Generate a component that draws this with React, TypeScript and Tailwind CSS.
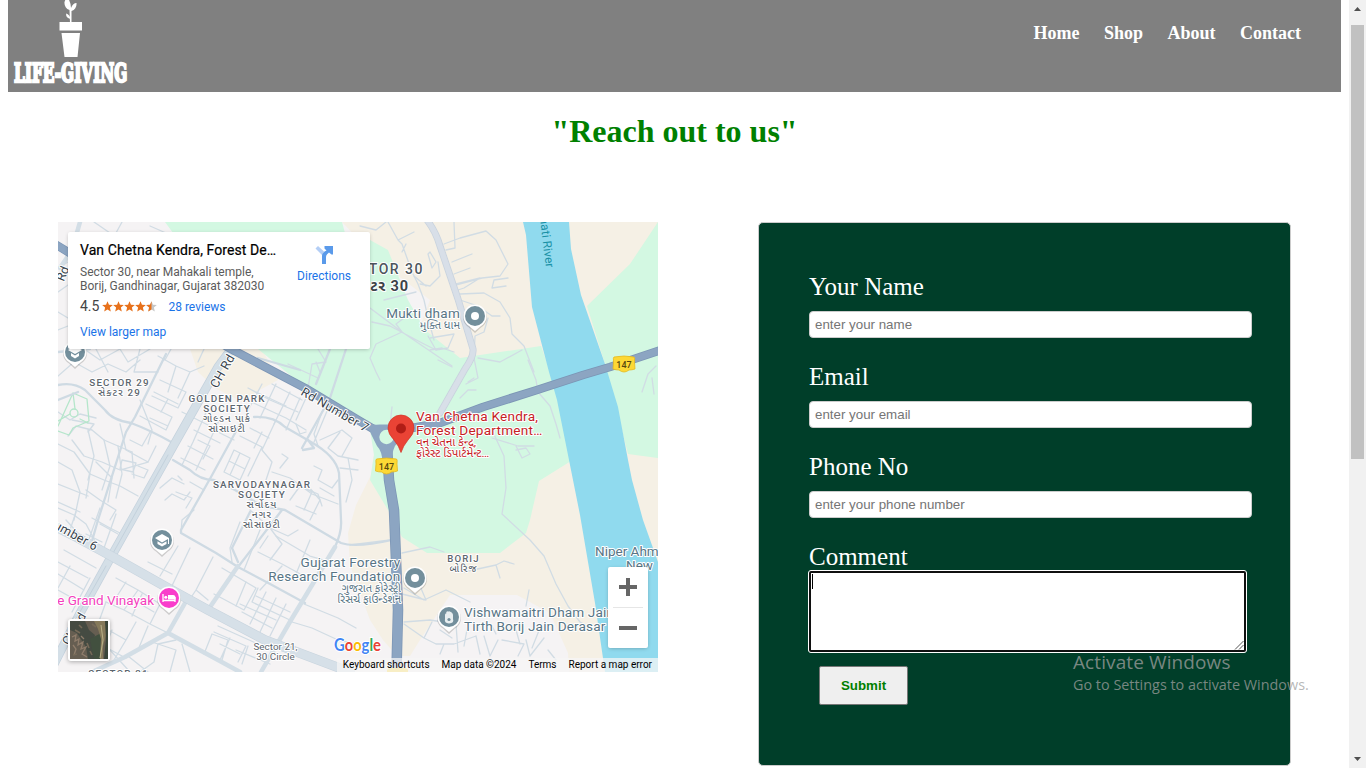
import React from "react";

const SANS = "Roboto, 'Noto Sans', 'Noto Sans Gujarati', sans-serif";

const minorRoads = [
  // north-west corner
  "M58 268L68 262M58 292L68 285M58 312L68 318M58 330L68 326",
  "M94 222L110 233M122 222L116 233M150 226L166 233",
  // below the info card
  "M84 349L100 360L120 349M96 349L108 372M120 349L128 362L150 349M140 349L134 372L158 372M171 349L165 360M58 376L74 362L92 372L108 364L126 372L140 360",
  "M158 356L176 366L190 372L204 366M176 366L168 392M190 372L178 398M204 349L198 362",
  "M160 380L186 392L178 408L152 396M154 392L168 399L161 412M168 399L178 404M146 404L172 417L166 430L140 416M150 418L168 426",
  // west quarter
  "M68 436L76 426L92 430L104 440L118 446L132 452M72 440L84 456L102 462L120 470L148 462",
  "M58 444L74 452L90 474L86 498M58 462L72 470L80 492L74 520M58 484L88 496M58 502L80 512",
  "M88 430L94 456L88 480M104 440L110 466L102 490M118 446L122 474L116 498M132 452L134 478",
  "M120 424L126 450L148 462L156 446M130 440L142 446L150 432M122 460L136 463L133 472L120 469ZM138 466L148 470L144 478L132 474",
  "M90 474L104 480L120 486L138 496M86 490L100 500L116 510L110 520M96 462L112 478L108 502M72 420L94 424L88 432",
  "M58 412L70 420L80 414L96 418M140 400L152 430L148 444",
  "M58 508L74 515L86 524L96 543M66 520L84 540M100 508L88 542M116 514L104 548M130 520L118 546",
  "M76 512L70 530M92 518L110 528L122 534M86 534L102 542M100 524L118 534",
  // central quarter
  "M182 412L208 425M194 430L220 443M188 446L213 459M181 458L205 470M208 408L193 442L182 465M221 416L205 451L196 470",
  "M218 432L234 440M198 440L210 446L203 459M234 450L250 458L240 480L224 472ZM240 453L230 475M229 461L245 469",
  "M240 436L262 447L248 476M250 428L269 438M262 432L254 448M276 420L262 450L272 462L266 480M282 454L288 458L280 468",
  "M160 488L172 478L184 484M178 476L182 480M165 500L172 494L184 500L190 492M176 492L192 498L186 508M190 482L204 490",
  "M239 396L260 406L286 418L306 430M248 388L270 400L298 412M262 384L246 414M276 384L260 418M290 392L274 424M300 398L286 430",
  "M256 392L286 406M272 384L302 400M322 412L314 434L318 446M296 424L300 434L306 432M330 404L314 442M306 398L296 420",
  "M340 432L328 448L338 456M352 438L342 456M338 456L358 460M340 468L358 470M348 458L352 480L346 502M320 440L342 430L352 438",
  "M314 466L322 470L318 480L332 488L338 480M300 486L318 494L322 506M320 488L334 496M272 472L290 478L312 494L338 504",
  "M290 500L300 486L312 492L304 510M296 506L316 514M308 486L320 500L310 520",
  // research foundation quarter
  "M181 533L182 520L194 510M190 548L170 590M178 546L160 576M148 562L172 574M213 557L196 590L208 600M196 590L192 596",
  "M232 562L230 548L240 522M244 570L260 530M222 568L256 588L244 610L214 594M250 510L270 528L282 544L270 560",
  "M258 552L282 564L304 576M270 528L288 536L298 530M268 536L260 548M276 536L310 556L324 560M310 540L296 574",
  "M246 582L236 606M258 588L252 602L292 621M266 592L250 624M276 598L260 632M286 604L270 636M242 612L272 628M236 622L262 636",
  "M256 596L290 612M240 604L276 620M282 566L260 590M292 622L312 628L338 640L356 644M304 604L338 618L356 628",
  // south-west quarter
  "M116 578L138 590L124 610L106 602M126 582L112 604M138 590L160 604L150 624M130 598L154 612M142 594L132 616M124 610L150 624L168 633",
  "M106 602L98 624L126 640L136 622M98 624L88 648M112 630L104 650M126 640L114 660M96 642L122 656M148 626L138 650",
  "M58 574L84 590M58 590L76 600M70 566L58 588M90 578L72 612M64 550L96 568M58 562L88 578",
  "M176 640L158 644L154 662L140 672M204 654L212 634L228 640L222 660M214 632L246 646L238 662M230 638L220 660M220 644L240 654M218 626L258 644M248 646L242 664",
  "M110 650L130 672M128 656L148 672M152 642L176 650L170 672M182 644L190 672M236 650L270 664",
  // green belt
  "M388 222L398 240L402 244L412 272L418 284L424 300L428 318L434 340M398 240L414 232M406 244L402 252M386 222L376 230L360 226",
  "M430 252L436 262L432 268L428 254Z M438 262L440 276L430 286L420 284M414 276L426 286M384 300L416 292M430 338L454 334L448 348L436 350",
  "M444 244L460 238L486 231L496 240L508 264L500 276L482 278L452 286M454 222L455 248L446 250M452 262L472 254M454 274L470 268M456 284L480 278L464 288L458 290",
  "M492 288L494 280L508 278M492 288L506 286M460 294L484 293L500 302L510 318L512 334L524 346L534 372M460 300L478 306L492 316L500 316M488 318L484 332L475 336L474 360",
  "M370 308L402 332L452 366M372 322L390 326L424 344M402 332L396 324L404 318M402 332L376 344L370 358L376 372L380 380M430 350L442 348L454 352M424 344L436 350M428 336L436 350",
  "M474 358L478 378L466 384M460 398L468 390L476 390M468 382L474 378M478 358L500 362L522 350M438 360L452 367",
  "M528 360L536 380L538 392L550 406L556 424L560 438M492 430L504 456L506 488L502 514L530 540L544 556L556 584L568 606L580 622L594 630",
  "M492 438L518 446L534 446M516 446L522 458L530 454L526 448L516 450M318 349L326 362L312 364L308 388M288 364L318 378M316 362L320 372M642 392L648 374L656 366M654 394L652 378M392 407L390 426",
  // south
  "M402 553L430 547L444 552M464 572L496 565L500 578M496 565L504 561L514 564M404 588L424 600L446 590L470 602M420 586L426 600L402 594M350 545L390 540",
  "M404 622L430 620L456 624M404 624L424 638L436 644M456 624L458 652M424 638L432 622M436 644L454 644L476 636M440 630L452 638M468 624L464 646M444 644L440 654M476 636L480 654M484 636L490 656L498 640",
  "M502 640L524 644L518 656M526 640L530 656L544 638M516 630L520 644M548 650L556 660M529 590L526 606M492 626L496 634M540 628L532 648",
];

const localRoads = [
  "M58 385Q74 382 85 390L105 410Q112 420 131 423Q150 430 173 443",
  "M173 460L190 470Q200 480 214 480L235 490L262 506L285 510L341 543Q356 548 392 540",
  "M166 354L135 417L126 432L98 520L90 548",
  "M254 417Q274 416 285 427L311 442Q336 456 339 473L341 520Q342 532 335 547L291 620L261 672",
  "M240 424L211 477L181 530L181 533L216 553L238 567L272 585L305 603",
  "M302 448L330 398L346 349M308 440L314 448L303 450M258 358L300 370M316 384L330 349",
  "M238 567L282 510M238 562L232 548L250 512",
  "M58 352L90 349M58 400L78 392",
];

const mediumRoads = [
  "M238 566L208 610",
  "M185 603L168 633L125 657L92 672M168 633L218 660L240 672",
  "M335 547L291 620L261 672",
  "M80 222L72 250L60 268",
];

function MapLabel({ x, y, lines, size, color, spacing = 0, anchor = "middle", weight = 400, gap }: {
  x: number; y: number; lines: string[]; size: number; color: string; spacing?: number;
  anchor?: "start" | "middle" | "end"; weight?: number; gap: number;
}) {
  return (
    <text x={x} y={y} fontFamily={SANS} fontSize={size} fill={color} letterSpacing={spacing} textAnchor={anchor}
      fontWeight={weight} stroke="#ffffff" strokeWidth={2} strokeLinejoin="round" paintOrder="stroke">
      {lines.map((line, i) => (
        <tspan key={line} x={x} y={y + i * gap}>{line}</tspan>
      ))}
    </text>
  );
}

function Pin({ x, y, color, children }: { x: number; y: number; color: string; children: React.ReactNode }) {
  return (
    <g transform={`translate(${x} ${y})`}>
      <path d="M0 16L-6 10.5A12 12 0 1 1 6 10.5Z" fill="#000" opacity=".16" transform="translate(0 1)" />
      <path d="M0 15L-6 10A11.6 11.6 0 1 1 6 10Z" fill="#fff" />
      <circle r="10" fill={color} />
      {children}
    </g>
  );
}

function Shield({ x, y }: { x: number; y: number }) {
  return (
    <g transform={`translate(${x} ${y})`}>
      <path d="M-10-7Q0-9 10-7Q11-7 10.5-2L11 5Q8 6 5 6Q0 10-5 6Q-8 6-11 5L-10.500-2Q-11-7-10-7Z" fill="#fdd835" stroke="#e3b920" strokeWidth=".8" />
      <text y="3.500" textAnchor="middle" fontFamily={SANS} fontSize="9" fontWeight="500" fill="#57480f">147</text>
    </g>
  );
}

function MapCanvas() {
  const place = "#587585";
  return (
    <svg className="block h-[450px] w-[600px]" viewBox="58 222 600 450">
      <rect x="58" y="222" width="600" height="450" fill="#f5f3f4" />
      <path d="M342 222H658V672H569L568 653L550 613L517 595H450L438 613L420 640L410 656H397L383 640L370 620L350 565L348 533L356 505L371 475L375 445L430 300L380 262Z" fill="#f5f0e5" />
      <path d="M190 349H262L278 380L256 392L242 402L215 388L198 372Z" fill="#f5f0e5" />
      <path d="M165 222H342L345 233L370 240L388 250L408 300L425 330L460 358L541 346L560 400L571 461L539 481L530 520L526 533L500 553H427L402 537L388 510L370 480L374 455L370 430L306 388L258 349Z" fill="#d3f8e2" />
      <path d="M658 222L630 264L587 306L605 364L628 454L658 458Z" fill="#d3f8e2" />
      <path d="M523 222H569L571 249L581 295L605 364L618 407L628 460L632 480L643 520L658 562V672H605L595 603L580 515L557 400L549 372L532 307L526 235Z" fill="#90daee" />
      <g fill="none" strokeLinecap="round" strokeLinejoin="round">
        <g stroke="#d1dce4" strokeWidth="1.300">
          {minorRoads.map((d) => <path key={d} d={d} />)}
        </g>
        <path d="M58 426L73 393L87 399L89 421L73 428L69 435L58 431M73 393L75 409M58 421L70 414M80 419L88 423" stroke="#b5e6cb" strokeWidth="1.300" />
        <circle cx="74" cy="413" r="4" stroke="#b5e6cb" strokeWidth="1.300" />
        <g stroke="#cedae3" strokeWidth="2.300">
          {localRoads.map((d) => <path key={d} d={d} />)}
        </g>
        <g stroke="#d3dee6" strokeWidth="4.500">
          {mediumRoads.map((d) => <path key={d} d={d} />)}
        </g>
        <path d="M427 220Q436 232 440 246L458 299L473 349Q474 356 465 369L440 413" stroke="#c9d3de" strokeWidth="7" />
        <path d="M427 220Q436 232 440 246L458 299L473 349Q474 356 465 369L440 413" stroke="#d8dfe8" strokeWidth="5.400" />
        <path d="M238 340L218 367L175 443L111 557L78 617L50 672" stroke="#c5d2dd" strokeWidth="9" />
        <path d="M238 340L218 367L175 443L111 557L78 617L50 672" stroke="#d4dfe7" strokeWidth="7.600" />
        <path d="M168 455L112 555M106 566L72 626" stroke="#c3d1dc" strokeWidth="1" />
        <path d="M40 519L78 538L113 557L168 588L208 610L265 640L350 672" stroke="#c8d4de" strokeWidth="9.600" />
        <path d="M40 519L78 538L113 557L168 588L208 610L265 640L350 672" stroke="#d6e0e8" strokeWidth="8.400" />
        <path d="M50 241L150 302L231 349L305 388L358 420L375 430" stroke="#7b95b5" strokeWidth="8.500" />
        <path d="M50 241L150 302L231 349L305 388L358 420L375 430" stroke="#8ca5c2" strokeWidth="7" />
        <path d="M395 431L440 423L483 407L537 390L583 375L610 367L670 347" stroke="#7b95b5" strokeWidth="8.600" />
        <path d="M387 446L389 480L394 510L398 610L396 690" stroke="#7b95b5" strokeWidth="10.500" />
        <path d="M395 431L440 423L483 407L537 390L583 375L610 367L670 347" stroke="#8ca5c2" strokeWidth="7" />
        <path d="M387 446L389 480L394 510L398 610L396 690" stroke="#8ca5c2" strokeWidth="9" />
      </g>
      <path d="M368 424Q375 425 380 424.500H398V442Q392 448 391.500 462H382.500Q382 451 377 446Q374 440 371 434Z" fill="#8ca5c2" />
      <circle cx="386.500" cy="437" r="7.200" fill="#d3f8e2" />

      <Shield x={624} y={364} />
      <Shield x={386.500} y={466} />
      <path d="M387 672Q386 668 392 668H404Q409 668 408 672Z" fill="#fdd835" />

      <MapLabel x={424} y={274} lines={["SECTOR 30"]} size={14} spacing={1.500} weight={500} color="#4d565d" gap={0} anchor="end" />
      <MapLabel x={409} y={290.500} lines={["સેક્ટર 30"]} size={14.500} spacing={0.900} weight={700} color="#3c4348" gap={0} anchor="end" />
      <MapLabel x={460} y={318} lines={["Mukti dham"]} size={13.500} color={place} anchor="end" gap={0} spacing={0.250} />
      <MapLabel x={460} y={328.500} lines={["મુક્તિ ધામ"]} size={11} color={place} anchor="end" gap={0} />
      <MapLabel x={119.500} y={385.500} lines={["SECTOR 29", "સેક્ટર 29"]} size={9.800} spacing={1.150} weight={500} color="#5d666e" gap={10} />
      <MapLabel x={227} y={402} lines={["GOLDEN PARK", "SOCIETY", "ગોલ્ડન પાર્ક", "સોસાઇટી"]} size={9.900} spacing={1.100} weight={500} color="#5d666e" gap={10} />
      <MapLabel x={262} y={488} lines={["SARVODAYNAGAR", "SOCIETY", "સર્વોદય", "નગર", "સોસાઇટી"]} size={9.900} spacing={1.150} weight={500} color="#5d666e" gap={10} />
      <MapLabel x={463.500} y={561.500} lines={["BORIJ", "બોરિજ"]} size={9.600} spacing={1.100} weight={500} color="#5d666e" gap={10} />
      <MapLabel x={275.500} y={649.500} lines={["Sector 21,", "30 Circle"]} size={9.800} spacing={0.050} color="#5d666e" gap={10} />
      <MapLabel x={118.500} y={677} lines={["SECTOR 21"]} size={9.800} spacing={1.150} weight={500} color="#5d666e" gap={0} />
      <MapLabel x={400.500} y={567} lines={["Gujarat Forestry", "Research Foundation"]} size={13.600} spacing={0.230} color={place} anchor="end" gap={14} />
      <MapLabel x={401} y={591.500} lines={["ગુજરાત ફોરેસ્ટ્રી", "રિસર્ચ ફાઉન્ડેશન"]} size={11} color={place} anchor="end" gap={11} />
      <MapLabel x={464} y={617} lines={["Vishwamaitri Dham Jain", "Tirth Borij Jain Derasar"]} size={13.600} spacing={0.130} color={place} anchor="start" gap={14} />
      <MapLabel x={595} y={556} lines={["Niper Ahm"]} size={13.500} color={place} anchor="start" gap={0} />
      <MapLabel x={626} y={570} lines={["New"]} size={13.500} color={place} anchor="start" gap={0} />
      <MapLabel x={154} y={605} lines={["The Grand Vinayak"]} size={13.500} color="#f43fbd" anchor="end" gap={0} />
      <g transform="translate(302 391) rotate(30)">
        <MapLabel x={0} y={4} lines={["Rd Number 7"]} size={12.500} color="#38434d" anchor="start" gap={0} weight={400} spacing={0.300} />
      </g>
      <g transform="translate(95 551) rotate(29)">
        <MapLabel x={0} y={0} lines={["Rd Number 6"]} size={12.500} color="#38434d" anchor="end" gap={0} weight={400} spacing={0.300} />
      </g>
      <g transform="translate(217 389) rotate(-60)">
        <MapLabel x={0} y={0} lines={["CH Rd"]} size={12.500} color="#38434d" anchor="start" gap={0} weight={400} spacing={0.300} />
      </g>
      <g transform="translate(69 646) rotate(-60)">
        <MapLabel x={0} y={0} lines={["CH Rd"]} size={12.500} color="#38434d" anchor="start" gap={0} weight={400} />
      </g>
      <g transform="translate(61 281) rotate(-68)">
        <MapLabel x={0} y={3} lines={["Rd"]} size={12.500} color="#38434d" anchor="start" gap={0} weight={400} />
      </g>
      <text transform="translate(546 268) rotate(83)" textAnchor="end" fontFamily={SANS} fontSize="12" letterSpacing=".1" fill="#1a91a6">Sabarmati River</text>

      <Pin x={475} y={316} color="#738f9c"><circle r="4" fill="#fff" /></Pin>
      <Pin x={415} y={578} color="#738f9c"><circle r="4" fill="#fff" /></Pin>
      <Pin x={75} y={352} color="#738f9c">
        <path d="M-7-2L0-6L7-2L0 2ZM-4 1V4L0 6.500L4 4V1L0 3.500Z" fill="#fff" />
      </Pin>
      <Pin x={162} y={540} color="#738f9c">
        <path d="M-7-2L0-6L7-2V4H6V-1L0 2.500ZM-4.500 1.300V4L0 6.500L4.500 4V1.300L0 3.800Z" fill="#fff" />
      </Pin>
      <Pin x={449} y={617} color="#738f9c">
        <path d="M-4-2Q-4-4-2.700-3.500V-5Q-1-6.500-.8-5Q0-7 1-5Q2.500-6 2.700-4Q4-4 4-2V2Q5.500 6 0 6.500Q-5 6-4 2Z" fill="#e8eef0" />
        <circle cy="2.500" r="1.600" fill="#738f9c" />
      </Pin>
      <Pin x={169} y={598} color="#f93dcb">
        <path d="M-6-4V4M-6 2.500H6M6 4V-1" stroke="#fff" strokeWidth="1.300" />
        <path d="M-1-3H4Q6.500-3 6.500 0V1.500H-1Z" fill="#fff" /><circle cx="-3.200" cy="-.7" r="1.500" fill="#fff" />
      </Pin>

      <path d="M401 452.500Q399 446 394 440Q388 434 388 428A13 13 0 0 1 414 428Q414 434 408 440Q403 446 401 452.500Z" fill="#ea4335" stroke="#d33427" strokeWidth=".7" />
      <circle cx="401" cy="428.500" r="5" fill="#b11d16" />
      <MapLabel x={416} y={421} lines={["Van Chetna Kendra,", "Forest Department…"]} size={13.600} spacing={0.230} color="#c5221f" anchor="start" gap={14} />
      <MapLabel x={416} y={445.500} lines={["વન ચેતના કેન્દ્ર,", "ફોરેસ્ટ ડિપાર્ટમેન્ટ…"]} size={11.500} color="#c5221f" anchor="start" gap={11} />

      <text x="334" y="651" fontFamily="Lato, sans-serif" fontSize="16.500" textLength="47" lengthAdjust="spacingAndGlyphs" stroke="#fff" strokeWidth="2" paintOrder="stroke" fontWeight="700">
        <tspan fill="#4285f4">G</tspan><tspan fill="#ea4335">o</tspan><tspan fill="#fbbc05">o</tspan><tspan fill="#4285f4">g</tspan><tspan fill="#34a853">l</tspan><tspan fill="#ea4335">e</tspan>
      </text>
    </svg>
  );
}

const starPath = "M6 .2L7.600 4L11.800 4.400L8.600 7.200L9.600 11.500L6 9.200L2.400 11.500L3.400 7.200L.2 4.400L4.400 4Z";

function InfoCard() {
  return (
    <div className="absolute left-[10px] top-[10px] flex h-[117px] w-[302px] justify-between rounded-[2px] bg-white pl-3 pr-[19px] pt-[10px] font-[Roboto,sans-serif] shadow-[0_1px_4px_-1px_rgba(0,0,0,0.3)]">
      <div className="flex flex-col">
        <div className="whitespace-nowrap text-[14px] leading-4 tracking-[0.080px] text-black [-webkit-text-stroke:0.2px_black]">Van Chetna Kendra, Forest De…</div>
        <div className="mt-[7px] whitespace-nowrap text-[12px] leading-[14px] text-[#5b5b5b]">Sector 30, near Mahakali temple,<br />Borij, Gandhinagar, Gujarat 382030</div>
        <div className="mt-[6px] flex h-4 items-center text-[12px]">
          <span className="relative -top-px mr-[3px] text-[14px] text-[#444]">4.5</span>
          <svg className="relative -top-px h-[11px] w-[55px]" viewBox="0 0 60 12">
            {[0, 1, 2, 3].map((i) => <path key={i} d={starPath} fill="#e7711b" transform={`translate(${i * 12} 0)`} />)}
            <path d={starPath} fill="#c6c6c6" transform="translate(48 0)" />
            <path d="M54 .2V9.200L50.400 11.500L51.400 7.200L48.200 4.400L52.400 4Z" fill="#e7711b" />
          </svg>
          <span className="ml-[11px] text-[#1a73e8]">28 reviews</span>
        </div>
        <div className="mt-[10px] text-[12px] leading-[14px] text-[#1a73e8]">View larger map</div>
      </div>
      <div className="flex flex-col items-center pt-[2px]">
        <svg className="h-[22px] w-[22px]" viewBox="0 0 22 22">
          <path d="M2.500 4.500L5 2L11 7.500L9.500 11.500Z" fill="#b3cef6" />
          <path d="M9 20V12Q9 8.500 13.500 6.500L11.500 4.500V2H20V10.500H18.500L16 8.500Q13 10.500 13 13V20Z" fill="#5a9aea" />
        </svg>
        <div className="mt-[3px] text-[12px] leading-[14px] text-[#1a73e8]">Directions</div>
      </div>
    </div>
  );
}

function MapPanel() {
  return (
    <div className="relative h-[450px] w-[600px] shrink-0 overflow-hidden">
      <MapCanvas />
      <InfoCard />
      <div className="absolute left-[10px] top-[397px] h-[42px] w-[42px] rounded-[3px] border-2 border-white bg-[#615b50] shadow-[0_1px_4px_rgba(0,0,0,0.3)]">
        <svg className="h-[38px] w-[38px]" viewBox="0 0 38 38">
          <rect width="38" height="38" fill="#665e51" />
          <path d="M0 0H15L19 9L25 14L22 25L30 38H18L16 26L7 12L0 9Z" fill="#454b42" />
          <path d="M20 18L31 12L33 38H24Z" fill="#42503f" />
          <path d="M2 16L6 14L5 20L9 18L8 24L13 21L11 28L16 26L12 33L17 36M3 24L6 28L4 34M11 15L14 18" stroke="#8f7d6b" strokeWidth="1.300" fill="none" />
          <path d="M5 9L10 12M17 22L19 27M3 34L7 33M22 3L26 6M9 4L12 7M20 30L22 34" stroke="#766a58" strokeWidth="1.600" />
          <path d="M24 0H36V14L33 25V38H30L31 18L28 8Z" fill="#85795a" />
          <path d="M31 4L33 19L30 37" stroke="#b9b187" strokeWidth="1" fill="none" />
          <path d="M35 0H38V38H34L36 18Z" fill="#394438" />
        </svg>
      </div>
      <div className="absolute left-[550px] top-[345px] flex h-[81px] w-10 flex-col items-center rounded-[2px] bg-white shadow-[0_1px_4px_-1px_rgba(0,0,0,0.3)]">
        <svg className="h-10 w-10" viewBox="0 0 40 40"><path d="M11 20H29M20 11V29" stroke="#666" strokeWidth="4" /></svg>
        <div className="h-px w-[30px] bg-[#e6e6e6]" />
        <svg className="h-10 w-10" viewBox="0 0 40 40"><path d="M11 20H29" stroke="#666" strokeWidth="4" /></svg>
      </div>
      <div className="absolute bottom-0 right-0 flex h-[14px] items-center gap-3 whitespace-nowrap bg-[#f5f5f5]/75 pl-[6px] pr-[6px] font-[Roboto,sans-serif] text-[10px] leading-[14px] text-black">
        <span>Keyboard shortcuts</span><span>Map data ©2024</span><span>Terms</span><span>Report a map error</span>
      </div>
    </div>
  );
}

function Logo() {
  return (
    <svg className="h-[92px] w-[130px] shrink-0" viewBox="8 0 130 92" fill="#fff">
      <path d="M70 23L69.500 10Q64 8 64.500 2L66 -2H68Q71 3 71 8Q73 3 76.500 3Q77 9 71.500 11L71.500 23Z" />
      <path d="M70.500 19Q66 18 66 13.500Q70 14.500 70.500 19Z" />
      <path d="M59.500 22H82V30.500H59.500ZM61.500 33H80L77.500 57H64.500Z" />
      <g transform="translate(14 81.500) scale(.6 1)">
        <text fontFamily="'DejaVu Serif', serif" fontWeight="700" fontSize="25.500" textLength="189" lengthAdjust="spacingAndGlyphs" stroke="#fff" strokeWidth="2.400">LIFE-GIVING</text>
      </g>
    </svg>
  );
}

function Field({ label, placeholder }: { label: string; placeholder: string }) {
  return (
    <label className="flex h-[90px] flex-col">
      <span className="text-[25px] leading-[29px] text-white">{label}</span>
      <input placeholder={placeholder} className="mt-[10px] h-[27px] w-[443px] rounded-[4px] border border-[#ccc] bg-white px-[5px] font-['Liberation_Sans',sans-serif] text-[13.333px] text-black placeholder:text-[#757575]" />
    </label>
  );
}

export default function App() {
  return (
    <div className="relative flex h-[768px] w-[1366px] overflow-hidden bg-white font-['Liberation_Serif',serif]">
      <div className="flex w-[1349px] shrink-0 flex-col px-2">
        <header className="flex h-[92px] shrink-0 justify-between bg-[#808080]">
          <Logo />
          <nav className="flex gap-[24.500px] pr-10 pt-[23px] text-[18px] font-bold leading-[21px] text-white">
            <a>Home</a><a>Shop</a><a>About</a><a>Contact</a>
          </nav>
        </header>
        <h1 className="mt-[21px] text-center text-[32px] font-bold leading-[37px] text-[#008000]">"Reach out to us"</h1>
        <main className="mt-[72px] flex gap-[100px] pl-[50px]">
          <MapPanel />
          <form className="flex h-[544px] w-[533px] flex-col rounded-[5px] border border-[#ccc] bg-[#003e29] pl-[50px] pt-[49px]">
            <Field label="Your Name" placeholder="enter your name" />
            <Field label="Email" placeholder="enter your email" />
            <Field label="Phone No" placeholder="enter your phone number" />
            <span className="text-[25px] leading-[29px] text-white">Comment</span>
            <div className="-ml-px -mt-px flex h-[83px] w-[439px] shrink-0 items-stretch justify-between rounded-[3px] border border-white bg-white">
              <div className="flex flex-1 items-start justify-between rounded-[2px] border-2 border-[#101010] pl-px pt-px">
                <div className="h-[15px] w-px bg-black" />
                <svg className="h-[10px] w-[10px] self-end" viewBox="0 0 10 10"><path d="M1 9.500L9.500 1M5 9.500L9.500 5" stroke="#555" strokeWidth="1" /></svg>
              </div>
            </div>
            <button type="button" className="ml-[10px] mt-[13px] h-[39px] w-[89px] shrink-0 rounded-[2px] border border-[#767676] bg-[#efefef] font-['Liberation_Sans',sans-serif] text-[13.333px] font-bold text-[#008000]">Submit</button>
          </form>
        </main>
      </div>
      <div className="flex w-[17px] shrink-0 flex-col items-center bg-[#f1f1f1]">
        <svg className="h-[25px] w-[17px] shrink-0" viewBox="0 0 17 25"><path d="M5 11L8.500 7L12 11Z" fill="#505050" /></svg>
        <div className="h-[434px] w-[13px] shrink-0 bg-[#c1c1c1]" />
        <svg className="mt-auto h-[17px] w-[17px] shrink-0" viewBox="0 0 17 17"><path d="M5 6L8.500 10L12 6Z" fill="#505050" /></svg>
      </div>
      <div className="absolute left-[1073px] top-[650px] whitespace-nowrap font-['Open_Sans',sans-serif] text-[#a0a0a0]/75">
        <div className="text-[19px] leading-6 tracking-[0.1px]">Activate Windows</div>
        <div className="text-[14.400px] leading-[22px]">Go to Settings to activate Windows.</div>
      </div>
    </div>
  );
}
